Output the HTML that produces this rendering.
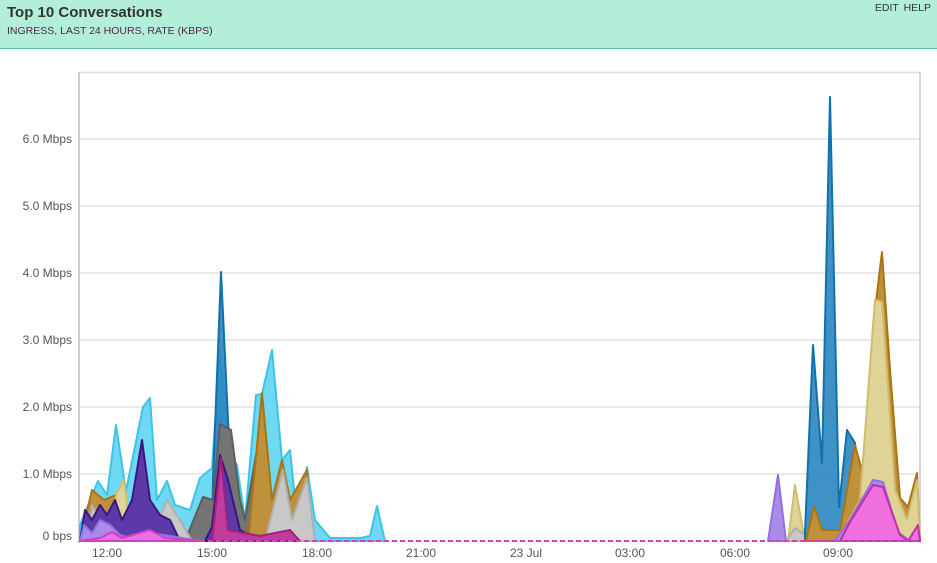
<!DOCTYPE html>
<html><head><meta charset="utf-8"><style>
body{margin:0;width:937px;height:563px;overflow:hidden;background:#fff;font-family:"Liberation Sans",sans-serif;position:relative}
.hdr{position:absolute;left:0;top:0;width:937px;height:48px;background:#b3eedb;border-bottom:1px solid #5cc39a}
.t{position:absolute;left:7px;top:4px;font-size:15px;font-weight:bold;color:#333}
.s{position:absolute;left:7px;top:25px;font-size:10.5px;color:#4a2a4a}
.lk{position:absolute;right:6px;top:2px;font-size:10.5px;color:#333;word-spacing:2px}
svg{position:absolute;left:0;top:0}
text{font-family:"Liberation Sans",sans-serif;font-size:12px;fill:#555}
</style></head><body>
<div class="hdr"><div class="t">Top 10 Conversations</div><div class="s">INGRESS, LAST 24 HOURS, RATE (KBPS)</div><div class="lk">EDIT HELP</div></div>
<svg width="937" height="563">
<g stroke="#e0e0e0" stroke-width="1.5">
<line x1="80" y1="72.5" x2="920" y2="72.5"/>
<line x1="80" y1="139" x2="920" y2="139"/><line x1="80" y1="206" x2="920" y2="206"/>
<line x1="80" y1="273" x2="920" y2="273"/><line x1="80" y1="340" x2="920" y2="340"/>
<line x1="80" y1="407" x2="920" y2="407"/><line x1="80" y1="474" x2="920" y2="474"/>
</g>
<line x1="79" y1="72" x2="79" y2="543" stroke="#ccc" stroke-width="2"/>
<line x1="920" y1="72" x2="920" y2="543" stroke="#ccc" stroke-width="1.5"/>
<g text-anchor="end">
<text x="72" y="143">6.0 Mbps</text><text x="72" y="210">5.0 Mbps</text><text x="72" y="277">4.0 Mbps</text>
<text x="72" y="344">3.0 Mbps</text><text x="72" y="411">2.0 Mbps</text><text x="72" y="478">1.0 Mbps</text><text x="72" y="540">0 bps</text>
</g>
<g text-anchor="middle">
<text x="107" y="557">12:00</text><text x="212" y="557">15:00</text><text x="317" y="557">18:00</text><text x="421" y="557">21:00</text>
<text x="526" y="557">23 Jul</text><text x="630" y="557">03:00</text><text x="735" y="557">06:00</text><text x="838" y="557">09:00</text>
</g>
<g stroke-width="2" stroke-linejoin="round">
<!-- cyan -->
<polygon fill="#6fd8f2" stroke="#3cc4e8" points="80,541 80,525 98,481 107,495 116,425 126,491 143,407 150,398 157,500 167,481 175,505 190,510 200,478 212,468 220,350 230,455 237,465 245,520 256,395 262,394 272,350 282,460 290,450 297,520 307,467 315,520 330,538 360,538 370,536 377,506 385,541"/>
<!-- dark blue -->
<polygon fill="#2a86c0" fill-opacity="0.9" stroke="#1270aa" points="212,541 213,480 221,272 228,420 236,541"/>
<!-- dark gray -->
<polygon fill="#747474" stroke="#5d5d5d" points="185,541 203,497 213,500 220,424 231,430 240,500 245,520 256,455 264,462 272,520 285,541"/>
<!-- brown -->
<polygon fill="#c0913d" stroke="#a87510" points="80,541 92,490 104,500 116,495 125,520 130,541"/>
<polygon fill="#c0913d" stroke="#a87510" points="248,541 262,393 272,500 282,460 290,500 307,470 312,541"/>
<polygon fill="#e0d398" stroke="#d0bd70" points="110,541 116,495 124,480 132,541"/>
<!-- light gray -->
<polygon fill="#c8c8c8" stroke="#b0b0b0" points="150,541 167,500 180,520 192,541"/>
<polygon fill="#c8c8c8" stroke="#b0b0b0" points="265,541 283,470 292,520 307,478 315,541"/>
<polygon fill="#c8c8c8" stroke="#b0b0b0" points="88,541 92,505 100,520 112,515 122,541"/>
<!-- dark purple -->
<polygon fill="#5b3aa8" stroke="#3d1580" points="80,541 85,510 92,520 100,505 107,515 115,500 122,520 132,500 142,440 150,500 160,515 170,520 180,541"/>
<polygon fill="#5b3aa8" stroke="#3d1580" points="205,541 212,527 220,455 228,480 240,530 250,536 270,541"/>
<!-- light purple -->
<polygon fill="#a98be8" stroke="#9370e0" points="80,541 84,525 92,533 100,520 110,525 120,535 130,538 150,533 170,536 200,541"/>
<!-- magenta -->
<polygon fill="#c03c9c" stroke="#a0207e" points="212,541 221,458 228,530 260,536 290,530 300,541"/>
<polygon fill="#f070e0" stroke="#d040c0" points="80,541 100,538 112,532 122,538 150,530 165,538 200,541"/>
<!-- right side -->
<polygon fill="#a98be8" stroke="#9370e0" points="768,541 778,475 786,541"/>
<polygon fill="#e0d398" stroke="#d0bd70" points="788,541 795,485 803,530 806,541"/>
<polygon fill="#c8c8c8" stroke="#b0b0b0" points="786,541 795,528 805,535 815,541"/>
<polygon fill="#2a86c0" fill-opacity="0.9" stroke="#1270aa" points="805,541 805,532 813,345 822,463 830,97 839,507 847,430 855,443 862,541"/>
<polygon fill="#c0913d" stroke="#a87510" points="806,541 814,506 822,530 840,530 855,445 864,478 873,327 882,252 890,370 900,498 908,507 917,473 920,541"/>
<polygon fill="#e0d398" stroke="#d0bd70" points="838,541 860,500 875,300 882,302 895,490 907,520 917,480 920,541"/>
<polygon fill="#a98be8" stroke="#9370e0" points="835,541 850,520 873,480 883,482 898,532 910,541"/>
<polygon fill="#f070e0" stroke="#c030a8" points="840,541 850,522 873,485 883,487 900,535 908,541 918,525 920,541"/>
</g>
<line x1="80" y1="541" x2="920" y2="541" stroke="#d040c0" stroke-width="2" stroke-dasharray="5,3"/>
</svg>
</body></html>
